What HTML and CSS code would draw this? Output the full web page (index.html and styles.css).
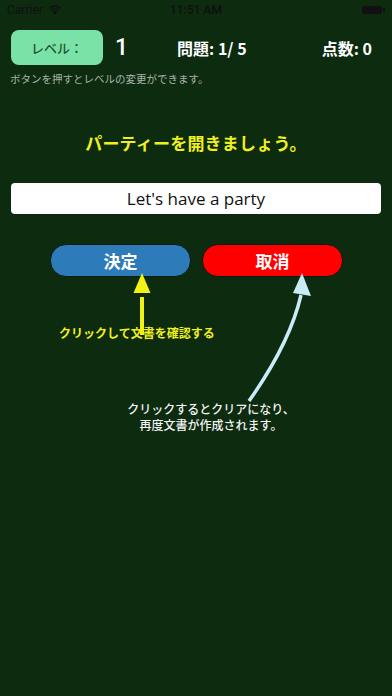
FILE: index.html
```html
<!DOCTYPE html>
<html lang="ja">
<head>
<meta charset="utf-8">
<link rel="stylesheet" href="styles.css">
</head>
<body>
<div class="screen">
  <div class="status">
    <div class="carrier">Carrier
      <svg class="wifi" width="14" height="10" viewBox="0 0 14 10"><path d="M7 9.5 L4.6 7 A3.4 3.4 0 0 1 9.4 7 Z" fill="#111"/><path d="M2.6 5 A6.2 6.2 0 0 1 11.4 5 L10.3 6.1 A4.7 4.7 0 0 0 3.7 6.1 Z" fill="#111"/><path d="M0.5 3 A9.2 9.2 0 0 1 13.5 3 L12.4 4.1 A7.7 7.7 0 0 0 1.6 4.1 Z" fill="#111"/></svg>
    </div>
    <div class="time">11:51 AM</div>
    <div class="battery"><span class="cell"></span><span class="nub"></span></div>
  </div>

  <div class="header">
    <button class="level-btn">レベル：</button>
    <span class="level-num">1</span>
    <span class="q">問題: 1/ 5</span>
    <span class="score">点数: 0</span>
  </div>
  <p class="hint">ボタンを押すとレベルの変更ができます。</p>

  <h1 class="title">パーティーを開きましょう。</h1>
  <div class="answer">Let's have a party</div>

  <div class="actions">
    <button class="btn ok">決定</button>
    <button class="btn cancel">取消</button>
  </div>

  <div class="notes">
    <svg class="arrows" width="392" height="170" viewBox="0 0 392 170">
      <line x1="142" y1="24" x2="142" y2="62" stroke="#f2f218" stroke-width="4"/>
      <polygon points="142,0 133.5,20 150.5,20" fill="#f2f218"/>
      <path d="M249 128 Q 290 70 301 22" fill="none" stroke="#c9ecf7" stroke-width="3.5"/>
      <polygon points="302,0 293,20 311,23" fill="#c9ecf7"/>
    </svg>
    <p class="note1">クリックして文書を確認する</p>
    <p class="note2">クリックするとクリアになり、<br>再度文書が作成されます。</p>
  </div>
</div>
</body>
</html>
```

FILE: styles.css
```css
html, body {
  margin: 0;
  padding: 0;
  background: #0c2b0f;
}
.screen {
  width: 392px;
  height: 696px;
  background: #0c2b0f;
  font-family: "Noto Sans CJK JP", "Noto Sans", sans-serif;
  position: relative;
  overflow: hidden;
}
.status {
  height: 20px;
  display: flex;
  align-items: center;
  justify-content: space-between;
  padding: 0 7px;
  position: relative;
  font-family: Roboto, "Noto Sans", sans-serif;
  font-size: 12px;
  color: #111;
}
.carrier {
  display: flex;
  align-items: center;
  gap: 5px;
  font-size: 12px;
}
.time {
  position: absolute;
  left: 0;
  right: 0;
  text-align: center;
  font-weight: 600;
}
.battery {
  display: flex;
  align-items: center;
}
.cell {
  width: 20px;
  height: 8px;
  border-radius: 2px;
  background: #111;
}
.nub {
  width: 2px;
  height: 4px;
  background: #111;
  margin-left: 1px;
}
.header {
  margin-top: 10px;
  height: 35px;
  display: flex;
  align-items: center;
  padding-left: 11px;
  color: #fff;
}
.level-btn {
  width: 92px;
  height: 35px;
  border: none;
  border-radius: 8px;
  background: #7ae2a6;
  color: #1d5433;
  font-family: "Noto Sans CJK JP", sans-serif;
  font-size: 13px;
  font-weight: 500;
  padding: 0;
}
.level-num {
  margin-left: 12px;
  font-family: Roboto, sans-serif;
  font-size: 23px;
  font-weight: 500;
}
.q {
  margin-left: 49px;
  font-size: 16px;
  font-weight: 700;
}
.score {
  margin-left: auto;
  margin-right: 20px;
  font-size: 16px;
  font-weight: 700;
}
.hint {
  margin: 7px 0 0 10px;
  font-size: 10.5px;
  line-height: 14px;
  color: #a9b3aa;
}
.title {
  margin: 45px 0 0;
  text-align: center;
  font-size: 17px;
  line-height: 24px;
  font-weight: 700;
  color: #f0f01e;
  letter-spacing: 0.2px;
}
.answer {
  margin: 28px 11px 0;
  height: 31px;
  background: #fff;
  border-radius: 4px;
  display: flex;
  align-items: center;
  justify-content: center;
  font-family: "Open Sans", Roboto, sans-serif;
  font-size: 17px;
  color: #111;
}
.actions {
  margin-top: 30px;
  display: flex;
  gap: 11px;
  padding-left: 50px;
}
.btn {
  width: 141px;
  height: 33px;
  border: 1px solid #0a1a0a;
  border-radius: 16px;
  color: #fff;
  font-family: "Noto Sans CJK JP", sans-serif;
  font-size: 17px;
  font-weight: 700;
  padding: 0;
}
.ok {
  background: #2d7bb8;
}
.cancel {
  background: #fe0000;
}
.notes {
  position: relative;
  height: 180px;
}
.arrows {
  position: absolute;
  left: 0;
  top: -4px;
}
.note1 {
  margin: 0;
  padding: 47px 0 0 59px;
  font-size: 12px;
  line-height: 18px;
  font-weight: 700;
  color: #f0f01e;
  position: relative;
}
.note2 {
  margin: 59px 0 0;
  padding-left: 30px;
  text-align: center;
  font-size: 12px;
  line-height: 16px;
  font-weight: 500;
  color: #f4f4f4;
  position: relative;
}
```
